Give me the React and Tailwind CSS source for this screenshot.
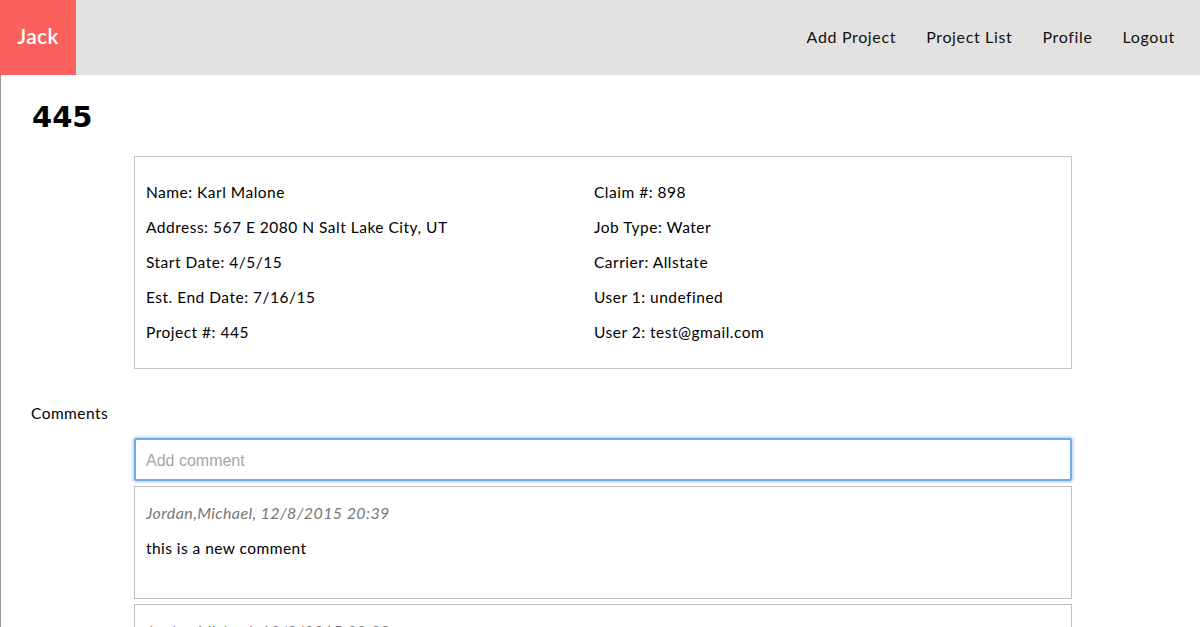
import { useState } from "react";

const details = [
  ["Name: Karl Malone", "Claim #: 898"],
  ["Address: 567 E 2080 N Salt Lake City, UT", "Job Type: Water"],
  ["Start Date: 4/5/15", "Carrier: Allstate"],
  ["Est. End Date: 7/16/15", "User 1: undefined"],
  ["Project #: 445", "User 2: test@gmail.com"],
];

const comments = [
  { author: "Jordan,Michael, 12/8/2015 20:39", text: "this is a new comment" },
  { author: "Jordan,Michael, 12/8/2015 20:39", text: "another comment" },
];

const App = () => {
  const [comment, setComment] = useState("");

  return (
    <div className="relative min-h-[627px] bg-white font-['Lato','Open_Sans',sans-serif] text-black overflow-hidden">
      {/* Navbar */}
      <nav className="flex items-stretch h-[75px] bg-[#e4e2e0]">
        <div className="w-[76px] bg-[#fa605c] flex items-center justify-center text-white text-[21px] font-semibold tracking-[0.3px] pb-[3px]">Jack</div>
        <div className="ml-auto flex items-center gap-[30px] pr-[25px] text-[16px] tracking-[0.65px] text-[#111] pb-[1px]">
          <a>Add Project</a>
          <a>Project List</a>
          <a>Profile</a>
          <a>Logout</a>
        </div>
      </nav>

      <div className="border-l border-[#9a9a9a] min-h-[552px]">
        <h1 className="pl-[31px] pt-[22px] text-[29px] leading-[40px] font-bold font-['DejaVu_Sans',sans-serif]">445</h1>

        {/* Details */}
        <div className="ml-[133px] mt-[19px] w-[938px] h-[213px] border border-[#c6c6c6] pl-[11px] pt-[22px]">
          {details.map(([left, right]) => (
            <div key={left} className="flex h-[35px] text-[15.5px] tracking-[0.5px] leading-[26px]">
              <div className="w-[448px]">{left}</div>
              <div>{right}</div>
            </div>
          ))}
        </div>

        <div className="pl-[30px] mt-[33px] text-[15.5px] tracking-[0.45px] leading-[22px]">Comments</div>

        <div className="ml-[133px] w-[938px] mt-[14px]">
          <input
            value={comment}
            onChange={(e) => setComment(e.target.value)}
            placeholder="Add comment"
            className="w-full h-[43px] px-[10px] pt-[2px] rounded-[2px] border-2 border-[#75a9ec] shadow-[0_0_3px_1px_#a8c9f3] outline-none text-[16px] font-['Liberation_Sans',sans-serif] placeholder:text-[#a5a5a5]"
          />
          {comments.map((c, i) => (
            <div key={i} className="mt-[5px] h-[113px] border border-[#c0c0c0] pl-[11px] pt-[16px]">
              <div className="italic text-[16px] tracking-[0.4px] text-[#777] leading-[20px]">{c.author}</div>
              <div className="mt-[15px] text-[15.5px] tracking-[0.45px] leading-[20px]">{c.text}</div>
            </div>
          ))}
        </div>
      </div>

      {/* bottom fade */}
      <div className="pointer-events-none absolute left-0 right-0 bottom-0 h-[40px] bg-gradient-to-b from-transparent to-[#ececec]" />
    </div>
  );
};

export default App;
